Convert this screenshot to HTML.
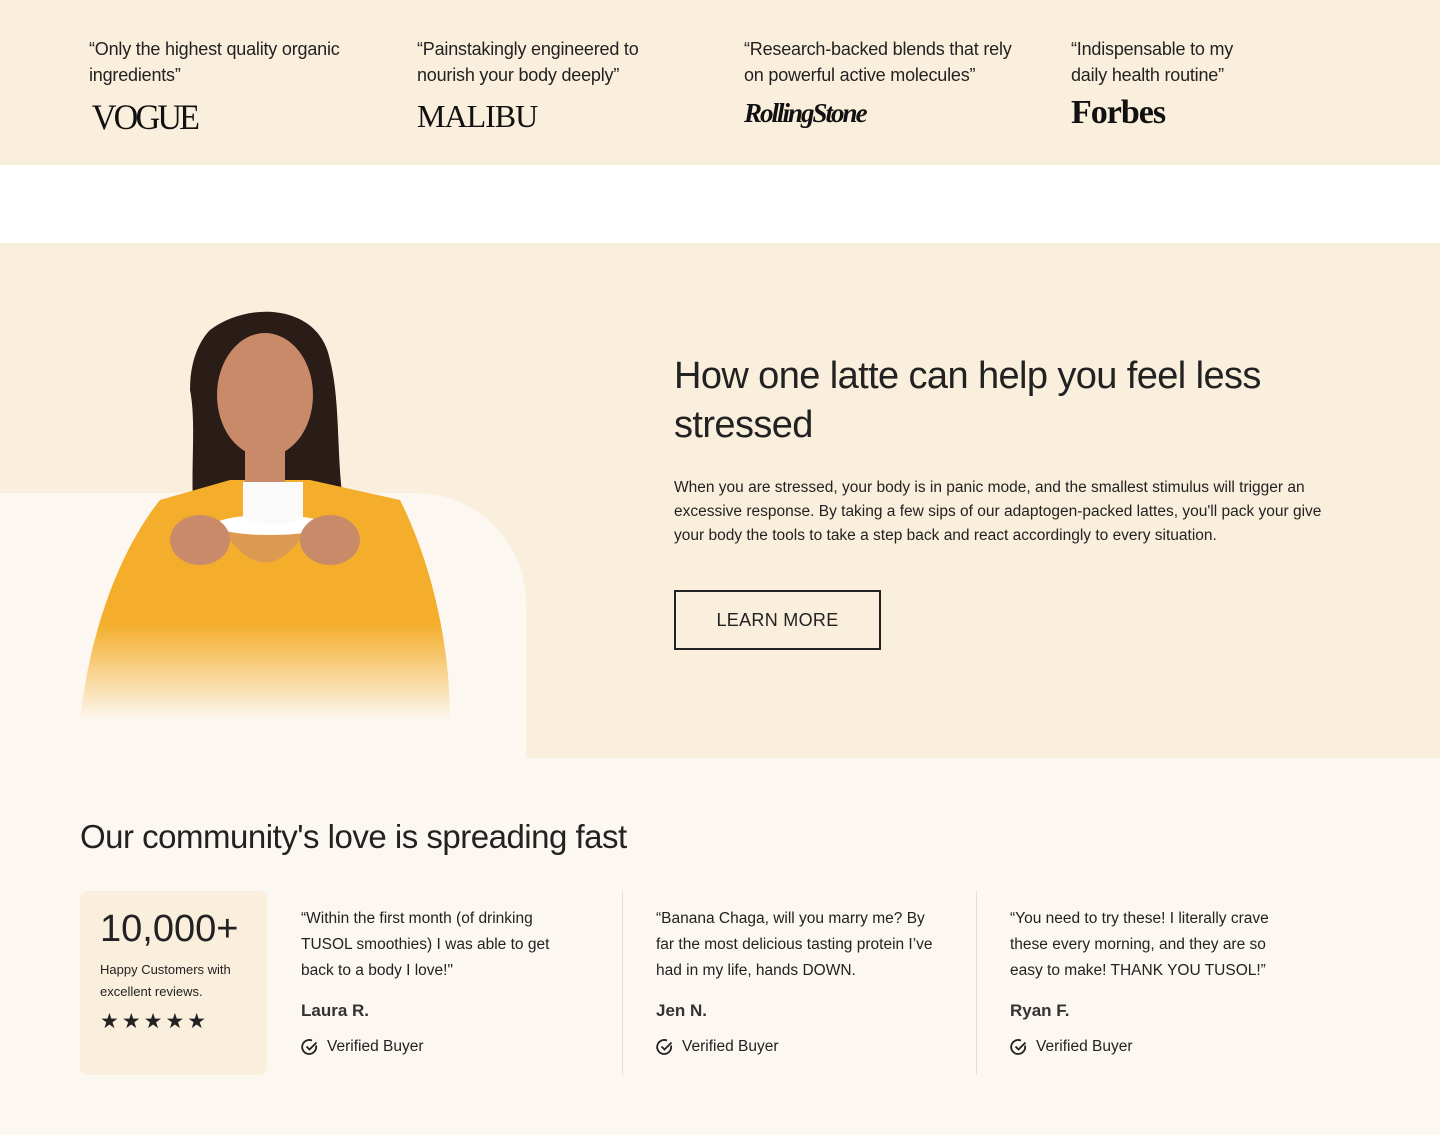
<!DOCTYPE html>
<html><head><meta charset="utf-8"><style>
*{margin:0;padding:0;box-sizing:border-box}
body{width:1440px;height:1135px;background:#fcf7f0;font-family:"Liberation Sans",sans-serif;color:#222;position:relative;overflow:hidden}
.top{position:absolute;left:0;top:0;width:1440px;height:165px;background:#faefdc}
.white{position:absolute;left:0;top:165px;width:1440px;height:78px;background:#fff}
.q{position:absolute;top:36px;font-size:18px;line-height:26px;letter-spacing:-0.2px;color:#222}
.logo{position:absolute;top:96px;font-family:"Liberation Serif",serif;color:#111}
.mid{position:absolute;left:0;top:243px;width:1440px;height:515px;background:#faefdc}
.shape{position:absolute;left:0;top:493px;width:526px;height:265px;background:#fcf7f0;border-top-right-radius:110px}
h2{position:absolute;left:674px;top:352px;font-size:38px;line-height:49px;font-weight:normal;letter-spacing:-0.6px;color:#222;width:640px}
.p{position:absolute;left:674px;top:476px;width:680px;font-size:15.5px;line-height:24px;color:#222}
.btn{position:absolute;left:674px;top:590px;width:207px;height:60px;border:2px solid #222;font-size:18px;display:flex;align-items:center;justify-content:center;letter-spacing:.3px}
h3{position:absolute;left:80px;top:818px;font-size:33px;font-weight:normal;letter-spacing:-0.5px}
.card{position:absolute;left:80px;top:891px;width:187px;height:184px;background:#faefdc;border-radius:8px;padding:18px 20px}
.card b{font-size:38px;font-weight:normal;display:block;line-height:40px}
.card p{font-size:13px;line-height:22px;margin-top:10px}
.stars{font-size:21px;letter-spacing:3px;margin-top:6px}
.r{position:absolute;top:906px;width:285px;font-size:15.5px;line-height:26px}
.r .n{font-size:17px;margin-top:14px;font-weight:bold;color:#333}
.r .v{margin-top:10px;display:flex;align-items:center;gap:8px}
.sep{position:absolute;top:891px;width:1px;height:184px;background:#e6ddd0}
</style></head><body>
<div class="top"></div>
<div class="white"></div>
<div class="q" style="left:89px">“Only the highest quality organic<br>ingredients”</div>
<div class="q" style="left:417px">“Painstakingly engineered to<br>nourish your body deeply”</div>
<div class="q" style="left:744px">“Research-backed blends that rely<br>on powerful active molecules”</div>
<div class="q" style="left:1071px">“Indispensable to my<br>daily health routine”</div>
<div class="logo" style="left:89px;font-size:36px;letter-spacing:-3px;transform:scaleX(.95)">VOGUE</div>
<div class="logo" style="left:417px;font-size:32px;letter-spacing:-1px;top:98px">MALIBU</div>
<div class="logo" style="left:744px;font-size:27px;font-style:italic;font-weight:bold;letter-spacing:-2px;top:98px">RollingStone</div>
<div class="logo" style="left:1071px;font-size:34px;font-weight:bold;letter-spacing:-1px;top:94px">Forbes</div>
<div class="mid"></div>
<div class="shape"></div>
<svg style="position:absolute;left:60px;top:300px" width="420" height="460" viewBox="0 0 420 460">
<defs><linearGradient id="f" x1="0" y1="0" x2="0" y2="1"><stop offset=".6" stop-color="#f4ae2c"/><stop offset="1" stop-color="#fcf7f0"/></linearGradient></defs>
<path d="M150 30 C190 0 260 5 270 60 C285 120 270 200 300 260 L260 280 L150 280 C120 220 140 140 130 90 C130 60 140 40 150 30Z" fill="#2a1c17"/>
<path d="M100 200 L170 180 L250 180 L340 200 C370 260 390 340 390 420 L20 420 C30 330 60 250 100 200Z" fill="url(#f)"/>
<ellipse cx="205" cy="95" rx="48" ry="62" fill="#c98a6a"/>
<rect x="185" y="140" width="40" height="45" fill="#c98a6a"/>
<path d="M160 225 Q205 300 250 225 Z" fill="#c98a6a" opacity=".6"/>
<ellipse cx="210" cy="225" rx="55" ry="10" fill="#fff"/>
<path d="M183 182 h60 v35 q-30 15 -60 0z" fill="#fafafa"/>
<ellipse cx="140" cy="240" rx="30" ry="25" fill="#c98a6a"/>
<ellipse cx="270" cy="240" rx="30" ry="25" fill="#c98a6a"/>
</svg>
<h2>How one latte can help you feel less stressed</h2>
<div class="p">When you are stressed, your body is in panic mode, and the smallest stimulus will trigger an excessive response. By taking a few sips of our adaptogen-packed lattes, you'll pack your give your body the tools to take a step back and react accordingly to every situation.</div>
<div class="btn">LEARN MORE</div>
<h3>Our community's love is spreading fast</h3>
<div class="card"><b>10,000+</b><p>Happy Customers with excellent reviews.</p><div class="stars">★★★★★</div></div>
<div class="r" style="left:301px">“Within the first month (of drinking TUSOL smoothies) I was able to get back to a body I love!"<div class="n">Laura R.</div><div class="v"><svg width="18" height="18" viewBox="0 0 18 18"><path d="M15 7.5A7 7 0 1 1 11 2.6" fill="none" stroke="#222" stroke-width="1.8"/><path d="M5.5 8.5l3 3 7-7" fill="none" stroke="#222" stroke-width="1.8"/></svg>Verified Buyer</div></div>
<div class="sep" style="left:622px"></div>
<div class="r" style="left:656px">“Banana Chaga, will you marry me? By far the most delicious tasting protein I’ve had in my life, hands DOWN.<div class="n">Jen N.</div><div class="v"><svg width="18" height="18" viewBox="0 0 18 18"><path d="M15 7.5A7 7 0 1 1 11 2.6" fill="none" stroke="#222" stroke-width="1.8"/><path d="M5.5 8.5l3 3 7-7" fill="none" stroke="#222" stroke-width="1.8"/></svg>Verified Buyer</div></div>
<div class="sep" style="left:976px"></div>
<div class="r" style="left:1010px;width:275px">“You need to try these! I literally crave these every morning, and they are so easy to make! THANK YOU TUSOL!”<div class="n">Ryan F.</div><div class="v"><svg width="18" height="18" viewBox="0 0 18 18"><path d="M15 7.5A7 7 0 1 1 11 2.6" fill="none" stroke="#222" stroke-width="1.8"/><path d="M5.5 8.5l3 3 7-7" fill="none" stroke="#222" stroke-width="1.8"/></svg>Verified Buyer</div></div>
</body></html>
